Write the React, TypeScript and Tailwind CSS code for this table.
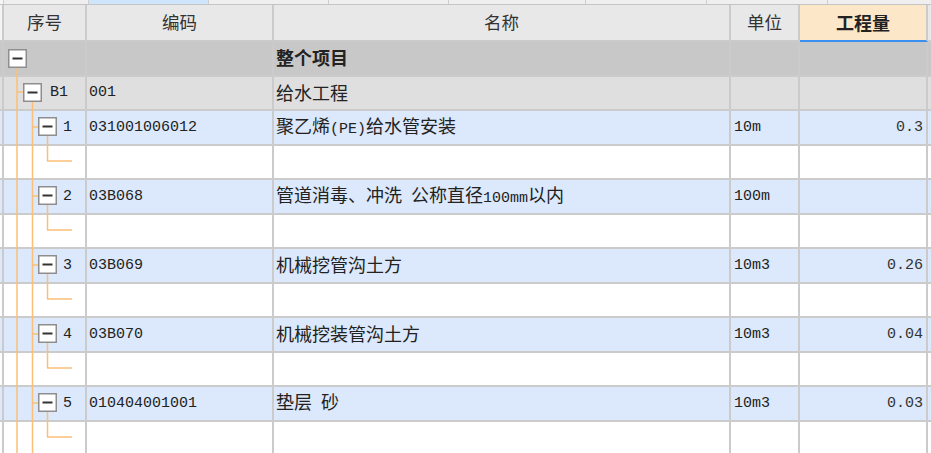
import React from 'react';

type Kind = 'root' | 'group' | 'item' | 'blank';
type Row = { kind: Kind; seq?: string; code?: string; name?: string; unit?: string; qty?: string };

const rows: Row[] = [
  { kind: 'root', name: '整个项目' },
  { kind: 'group', seq: 'B1', code: '001', name: '给水工程' },
  { kind: 'item', seq: '1', code: '031001006012', name: '聚乙烯(PE)给水管安装', unit: '10m', qty: '0.3' },
  { kind: 'blank' },
  { kind: 'item', seq: '2', code: '03B068', name: '管道消毒、冲洗 公称直径100mm以内', unit: '100m', qty: '' },
  { kind: 'blank' },
  { kind: 'item', seq: '3', code: '03B069', name: '机械挖管沟土方', unit: '10m3', qty: '0.26' },
  { kind: 'blank' },
  { kind: 'item', seq: '4', code: '03B070', name: '机械挖装管沟土方', unit: '10m3', qty: '0.04' },
  { kind: 'blank' },
  { kind: 'item', seq: '5', code: '010404001001', name: '垫层 砂', unit: '10m3', qty: '0.03' },
  { kind: 'blank' },
];

const bg: Record<Kind, string> = {
  root: 'bg-[#c8c8c8]',
  group: 'bg-[#dfdfdf]',
  item: 'bg-[#dce8fb]',
  blank: 'bg-white',
};

const O = '#fbbf78';

// vertical / horizontal connector pieces of the tree
const V = (x: number, y1: number, y2: number) => (
  <rect x={x - 0.75} y={y1} width={1.5} height={y2 - y1} fill={O} />
);
const H = (y: number, x1: number, x2: number) => (
  <rect x={x1} y={y - 0.75} width={x2 - x1} height={1.5} fill={O} />
);
const Box = (x: number, y: number) => (
  <g>
    <rect x={x + 0.75} y={y + 0.75} width={17.5} height={17.5} fill="#fff" stroke="#8e8e8e" strokeWidth={1.5} />
    <rect x={x + 4.5} y={y + 8.5} width={10} height={2} fill="#333" />
  </g>
);

function Tree({ kind, h }: { kind: Kind; h: number }) {
  const b = h + 2;
  return (
    <svg className="absolute left-0 top-0 overflow-visible pointer-events-none" width={87} height={h}>
      {kind === 'root' && (
        <>
          {V(17, 25, b)}
          {Box(8, 7)}
        </>
      )}
      {kind === 'group' && (
        <>
          {V(17, 0, b)}
          {H(15, 17, 23)}
          {V(32.5, 25, b)}
          {Box(23, 6)}
        </>
      )}
      {kind === 'item' && (
        <>
          {V(17, 0, b)}
          {V(32.5, 0, b)}
          {H(16, 32, 38)}
          {V(47.5, 25, b)}
          {Box(38, 6)}
        </>
      )}
      {kind === 'blank' && (
        <>
          {V(17, 0, b)}
          {V(32.5, 0, b)}
          {V(47.5, 0, 15)}
          {H(15, 47, 72)}
        </>
      )}
    </svg>
  );
}

const mono = "font-['Liberation_Mono',monospace] text-[15px]";

// ASCII runs are set in the narrow mono face, CJK in Noto
function Txt({ s }: { s: string }) {
  const parts = s.split(/([\x20-\x7e]+)/);
  return (
    <span className="whitespace-pre">
      {parts.map((p, i) =>
        i % 2 ? (
          <span key={i} className={mono}>
            {p}
          </span>
        ) : (
          p
        )
      )}
    </span>
  );
}

export default function App() {
  const tabs = [85, 120, 120, 120, 137, 121, 121];
  return (
    <div className="w-[931px] h-[453px] overflow-hidden bg-white text-[#222] font-['Noto_Sans_CJK_SC',sans-serif] text-[18px] leading-none">
      {/* clipped strip of the tab row above */}
      <div className="flex h-[5px] bg-[#efefef] border-b border-[#c4c4c4]">
        <div className="w-[3px] bg-[#f6f6f6]" />
        {tabs.map((w, i) => (
          <div
            key={i}
            style={{ width: w }}
            className={`border-l border-[#cfcfcf] ${i === 1 ? 'bg-[#cfe5fb]' : ''}`}
          />
        ))}
        <div className="flex-1 border-l border-[#cfcfcf]" />
      </div>

      {/* header */}
      <div className="flex h-[37px] text-[#333] text-[17.5px]">
        <div className="w-[2px] bg-[#f4f4f4] border-b-2 border-[#cbcbcb]" />
        <div className="w-[85px] flex items-center justify-center pb-[2px] bg-[#e8e8e8] border-l-2 border-r-2 border-b-2 border-[#cbcbcb]">序号</div>
        <div className="w-[187px] flex items-center justify-center pb-[2px] bg-[#e8e8e8] border-r-2 border-b-2 border-[#cbcbcb]">编码</div>
        <div className="w-[457px] flex items-center justify-center pb-[2px] bg-[#e8e8e8] border-r-2 border-b-2 border-[#cbcbcb]">名称</div>
        <div className="w-[69px] flex items-center justify-center pb-[2px] bg-[#e8e8e8] border-r-2 border-b-2 border-[#cbcbcb]">单位</div>
        <div className="w-[128px] flex items-center justify-center pb-[2px] bg-[#fde7c9] border-r-2 border-[#cbcbcb] border-b-2 border-b-[#3b8ff0] font-bold text-[18px] text-[#222]">工程量</div>
        <div className="flex-1 bg-[#e8e8e8] border-b-2 border-[#cbcbcb]" />
      </div>

      {/* body */}
      {rows.map((r, i) => {
        const h = i % 2 === 0 ? 35 : 34;
        return (
          <div
            key={i}
            style={{ height: h }}
            className={`relative flex border-b-2 border-[#cbcbcb] ${bg[r.kind]}`}
          >
            <Tree kind={r.kind} h={h - 2} />
            <div className="w-[2px]" />
            <div
              className={`w-[85px] flex items-center pb-[1px] border-l-2 border-r-2 border-[#cbcbcb] ${mono} ${
                r.kind === 'group' ? 'pl-[46px]' : 'pl-[59px]'
              }`}
            >
              {r.seq}
            </div>
            <div className={`w-[187px] flex items-center pl-[2px] pb-[1px] border-r-2 border-[#cbcbcb] ${mono}`}>{r.code}</div>
            <div className={`w-[457px] flex items-center pl-[2px] pb-[3px] border-r-2 border-[#cbcbcb] ${r.kind === 'root' ? 'font-bold' : ''}`}>
              {r.name && <Txt s={r.name} />}
            </div>
            <div className={`w-[69px] flex items-center pl-[3px] pb-[1px] border-r-2 border-[#cbcbcb] ${mono}`}>{r.unit}</div>
            <div className={`w-[128px] flex items-center justify-end pr-[3px] pb-[1px] border-r-2 border-[#cbcbcb] ${mono} text-[#333]`}>{r.qty}</div>
            <div className="flex-1" />
          </div>
        );
      })}
    </div>
  );
}
